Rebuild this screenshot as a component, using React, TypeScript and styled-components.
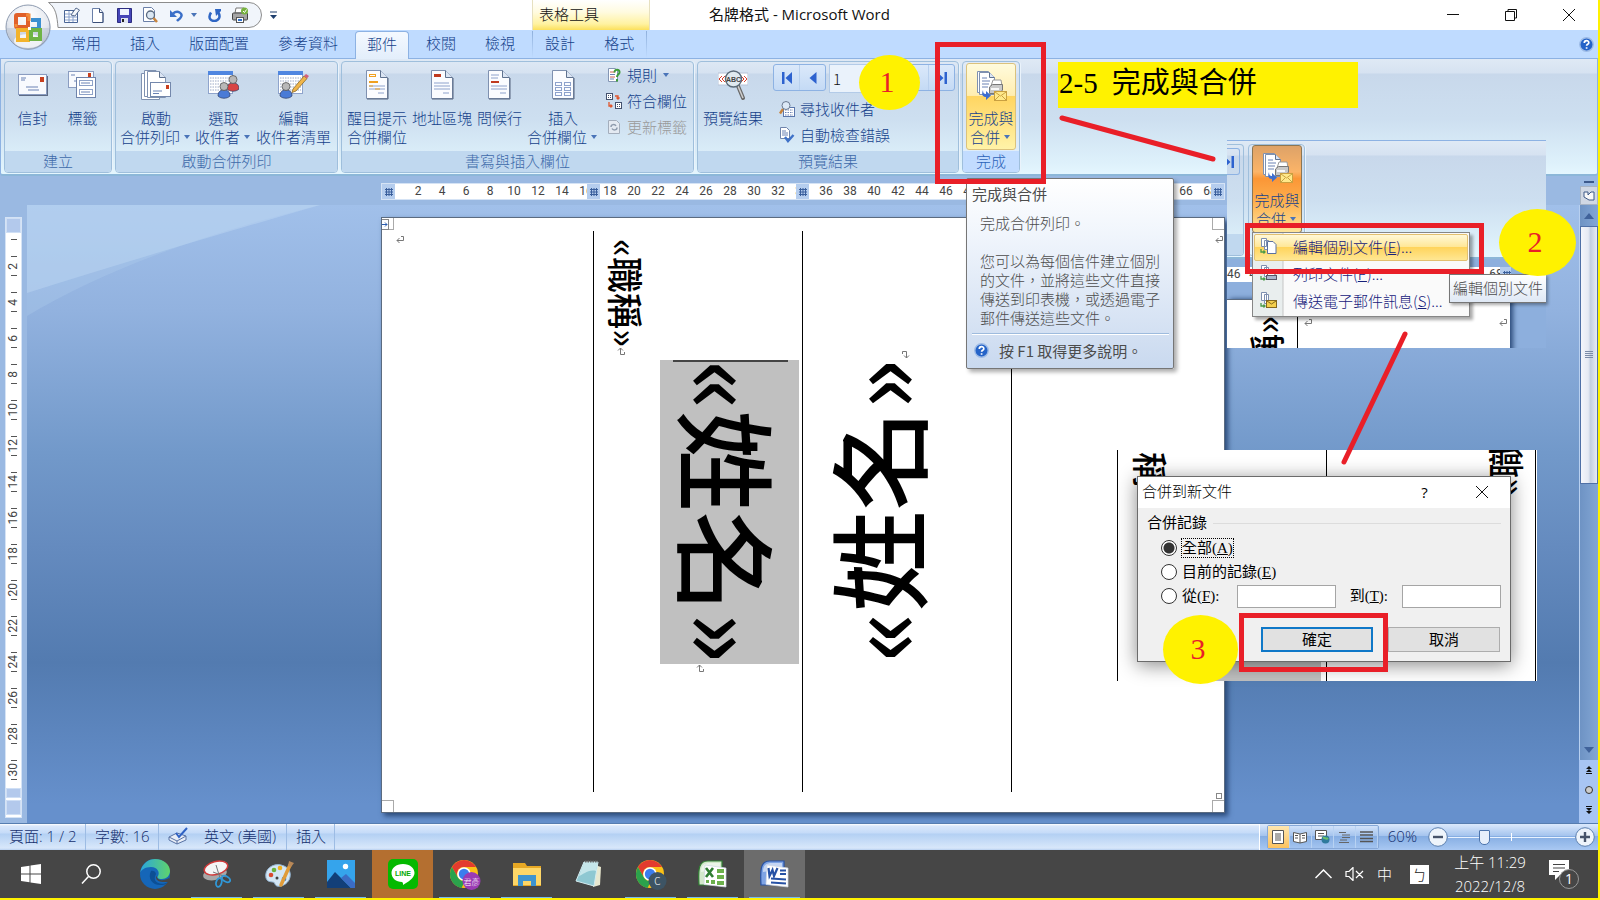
import React from "react";
import styled, { createGlobalStyle, css } from "styled-components";

const sans = `"Open Sans", "Noto Sans CJK TC", sans-serif`;
const cjk = `"Noto Sans CJK TC", "Noto Sans", sans-serif`;
const serif = `"Liberation Serif", "Noto Sans CJK TC", serif`;
const RED = "#e91f28";

const Global = createGlobalStyle`
  * { box-sizing: border-box; }
  body { margin: 0; background: #9ab9e2; font-family: ${sans}; font-size: 15px; font-weight: 300; }
  button, input { font: inherit; color: inherit; margin: 0; }
  button { background: none; border: 0; padding: 0; cursor: pointer; }
  svg { display: block; flex: none; }
  p { margin: 0; }
`;

/* ---------- shell ---------- */
const Shell = styled.div`
  position: relative; display: flex; flex-direction: column; min-height: 100vh;
  border-right: 2px solid #fff200; border-bottom: 2px solid #fff200; overflow: hidden;
`;
const TitleBar = styled.header`
  height: 30px; display: flex; align-items: center; background: #fff; color: #111;
`;
const Orb = styled.button`
  position: absolute; left: 4px; top: 3px; z-index: 2;
`;
const Quick = styled.div`
  position: relative; width: 214px; height: 30px; margin-left: 48px; padding-left: 11px;
  display: flex; align-items: center;
  & > svg { position: absolute; left: 0; top: 2px; }
`;
const QuickBtn = styled.button<{ $w?: number }>`
  position: relative; width: ${(p) => p.$w ?? 26}px; height: 22px;
  display: flex; align-items: center; justify-content: center;
`;
const ContextTitle = styled.div`
  width: 118px; height: 30px; margin-left: 248px; padding-left: 6px; line-height: 28px;
  background: linear-gradient(#ffffff, #fffbe0 40%, #fff2a0 80%, #fbe05c);
  border-left: 1px solid #e6e0c0; border-right: 1px solid #e6e0c0;
`;
const WindowTitle = styled.h1`
  margin: 0 0 0 59px; height: 30px; font-size: 15px; font-weight: 400; line-height: 28px; white-space: nowrap;
`;
const WindowButtons = styled.div`
  margin-left: auto; display: flex;
  button { width: 58px; height: 28px; display: grid; place-items: center; }
`;

const TabRow = styled.nav`
  height: 29px; display: flex; align-items: flex-end; gap: 5px; padding: 0 4px 0 59px;
  background: #bfdbff; border-bottom: 1px solid #8db2e3;
`;
const Tab = styled.button<{ $active?: boolean }>`
  height: 27px; padding: 0 12px 3px; line-height: 24px; color: #15428b; font-family: ${cjk};
  ${(p) => p.$active && css`
    margin-bottom: -1px; height: 28px; padding: 0 11px 3px; border: 1px solid #8db2e3; border-bottom: 0;
    border-radius: 4px 4px 0 0; background: linear-gradient(#f4f9ff, #e3eefb);
  `}
`;
const ContextTabs = styled.div`
  display: flex; gap: 5px; padding: 0 1px;
  background: linear-gradient(#8fb0dc, #bfdbff) left / 1px 100% no-repeat,
    linear-gradient(#8fb0dc, #bfdbff) right / 1px 100% no-repeat;
`;
const HelpButton = styled.button` margin-left: auto; align-self: center; `;

/* ---------- ribbon ---------- */
const ribbonFill = `linear-gradient(#dfe9f5 0, #d6e2f1 14px, #c8d8eb 15px, #cddff0 60px, #def1fb 104px, #e4f6fe)`;
const Ribbon = styled.section`
  display: flex; gap: 3px; padding: 2px 3px; height: 117px; color: #15428b;
  background: ${ribbonFill}; font-family: ${cjk};
  border-left: 1px solid #8db2e3; border-right: 1px solid #8db2e3;
  border-bottom: 2px solid #8cb7d8; border-radius: 0 0 3px 3px;
`;
const Group = styled.div<{ $w: number; $hot?: boolean }>`
  width: ${(p) => p.$w}px; height: 112px; display: flex; flex-direction: column; flex: none;
  border: 1px solid #9fbfdc; border-radius: 4px; overflow: hidden; box-shadow: 1px 0 0 #eaf3fb;
  ${(p) => p.$hot && css`background: #e8f1fa66;`}
`;
const GroupBody = styled.div`
  height: 89px; display: flex; gap: 1px; padding: 0 3px;
`;
const Caption = styled.div<{ $hot?: boolean }>`
  height: 21px; line-height: 19px; text-align: center;
  color: ${(p) => (p.$hot ? "#2b62b8" : "#3e6aaa")};
  background: ${(p) => (p.$hot ? "#c2dcff" : "#c0d8ef")};
`;
const Big = styled.button<{ $w: number; $state?: "hot" | "pressed" }>`
  width: ${(p) => p.$w}px; flex: none; display: flex; flex-direction: column; align-items: center;
  padding-top: 7px; line-height: 19px; white-space: nowrap;
  ${(p) => p.$state === "hot" && css`
    height: 87px; margin-top: 1px; padding-top: 5px; border: 1px solid #dbc27c; border-radius: 3px;
    background: linear-gradient(#fffbdc, #ffedb0 37%, #ffd561 38%, #ffdf7a 60%, #fff3a8);
  `}
  ${(p) => p.$state === "pressed" && css`
    height: 88px; padding-top: 5px; border: 1px solid #8b7654; border-radius: 3px;
    background: linear-gradient(#dda268, #fbb468 30%, #fb9636 38%, #fdb04e 65%, #fee49a);
  `}
`;
const BigIcon = styled.span` height: 32px; margin-bottom: 7px; display: grid; place-items: center; `;
const Line = styled.span` display: flex; align-items: center; gap: 4px; `;
const Caret = styled.i`
  border: 3px solid transparent; border-top: 4px solid #4a74b8; border-bottom: 0; margin-right: 2px;
`;
const Stack = styled.div<{ $inset?: boolean }>`
  display: flex; flex-direction: column; padding-left: ${(p) => (p.$inset ? 7 : 4)}px;
`;
const Small = styled.button`
  height: 26px; display: flex; align-items: center; gap: 5px; white-space: nowrap;
  span { line-height: 26px; }
  &:disabled { color: #9a9a9a; }
  i { margin-left: 1px; }
`;
const Rule = styled.i` width: 1px; height: 56px; margin: 16px 0 0 5px; background: #9ab6d4; box-shadow: 1px 0 #eef5fc; `;
const NavRow = styled.div` display: flex; height: 34px; padding: 2px 0 0 1px; `;
const NavPair = styled.div`
  width: 53px; height: 27px; display: flex; border: 1px solid #8db2e3; border-radius: 3px;
  background: linear-gradient(#dbe9fa, #c4daf5);
  button { flex: 1; display: grid; place-items: center; }
  button + button { border-left: 1px solid #b8d0ee; }
`;
const RecordInput = styled.input`
  width: 68px; height: 29px; margin: 0 5px 0 3px; padding: 0 3px; border: 1px solid #b3cbe8;
  background: #eaf2fb; color: #111;
`;

/* ---------- work area ---------- */
const Work = styled.main`
  flex: 1; display: grid; grid-template-columns: 27px 1fr 19px; grid-template-rows: 29px 1fr;
  background: #9ab9e2;
`;
const RulerStrip = styled.div` grid-column: 2; display: flex; justify-content: center; padding-top: 7px; `;
const HRuler = styled.div`
  position: relative; width: 844px; height: 17px; padding-left: 24px; display: flex; overflow: hidden;
  border: 1px solid #d5e3f5; background: #fff; color: #444; font: 12px/15px Roboto, ${cjk};
  span { width: 24px; flex: none; text-align: center; }
`;
const Marker = styled.i<{ $x: number }>`
  position: absolute; left: ${(p) => p.$x}px; top: 0; width: 13px; height: 15px;
  display: grid; place-items: center; background: #b5cdee;
`;
const LeftCol = styled.div` grid-column: 1; grid-row: 1 / 3; padding: 41px 5px 0; `;
const VRuler = styled.div`
  width: 17px; display: flex; flex-direction: column; border: 1px solid #d5e3f5; background: #fff;
  color: #444; font: 12px/15px Roboto, ${cjk};
`;
const VCap = styled.i<{ $h: number }>`
  height: ${(p) => p.$h}px; background: #b3c9ec; border: 1px solid #cfdff5; margin-bottom: 2px;
  &:first-child { margin: 0; }
`;
const VUnit = styled.span<{ $first?: boolean }>`
  height: ${(p) => (p.$first ? 15 : 36)}px; display: flex; flex-direction: column; align-items: center;
  justify-content: space-between;
  b { font-weight: 400; writing-mode: vertical-rl; transform: rotate(180deg); line-height: 15px; }
  &::before, &::after { content: ""; width: 6px; height: 1px; background: #555; margin: 9px 0 0; }
  &::after { margin: 0 0 8px; display: ${(p) => (p.$first ? "none" : "block")}; }
  &::before { margin: ${(p) => (p.$first ? 6 : 8)}px 0 0; }
`;
const Canvas = styled.div`
  position: relative; grid-column: 2; display: flex; justify-content: center; align-items: flex-start;
  padding: 12px 0 10px;
  background: linear-gradient(#a1c0ea, #92b2df 17%, #7299ca 40%, #658bbf 55%, #537bb0 74%, #6690cc 97%);
  & > svg { position: absolute; left: 0; top: 0; }
`;
const Page = styled.article`
  position: relative; width: 844px; min-height: 596px; padding: 13px 0 20px 14px; display: grid;
  grid-template-columns: 198px 209px 209px 1fr; background: #fff; color: #000;
  border: 1px solid #5b6b80; box-shadow: 3px 3px 5px #2b4a78;
`;
const Corner = styled.i<{ $r?: boolean; $b?: boolean }>`
  position: absolute; width: 12px; height: 12px; border: 0 solid #aaa;
  ${(p) => (p.$r ? "right: 0; border-left-width: 1px;" : "left: 0; border-right-width: 1px;")}
  ${(p) => (p.$b ? "bottom: 0; border-top-width: 1px;" : "top: 0; border-bottom-width: 1px;")}
`;
const Move = styled.i`
  position: absolute; left: 0; top: 1px; width: 7px; height: 11px; border: 1px solid #888; border-left: 0;
  color: #2a5db0; display: grid; place-items: center;
`;
const EndHandle = styled.i` position: absolute; right: 2px; bottom: 13px; width: 6px; height: 6px; border: 1px solid #888; `;
const Cell = styled.div`
  display: flex; justify-content: space-between; min-height: 561px;
  &:not(:last-of-type) { border-right: 1px solid #000; }
  & > svg { margin-top: 4px; }
  & > svg:only-child { margin-left: auto; }
`;
const FirstCell = styled(Cell)` & > svg:only-child { margin-left: 0; } `;
const Column = styled.div<{ $top: number; $side: number; $mark?: number }>`
  padding: ${(p) => p.$top}px ${(p) => p.$side}px 0; display: flex; flex-direction: column; flex: none;
  & > svg { margin-left: ${(p) => p.$mark ?? 0}px; }
`;
const NameColumn = styled(Column)` padding-right: 5px; padding-left: 0; `;
const VText = styled.span<{ $size: number; $flip?: boolean }>`
  writing-mode: vertical-rl; text-orientation: sideways; font: 500 ${(p) => p.$size}px/1 ${cjk};
  white-space: nowrap; ${(p) => p.$flip && "transform: rotate(180deg);"}
`;
const Selected = styled.div`
  width: 139px; height: 304px; display: flex; justify-content: center; align-items: center; position: relative;
  background: #c0c0c0;
  &::before { content: ""; position: absolute; top: 0; left: 13px; right: 11px; height: 2px; background: #444; }
`;

const ScrollCol = styled.div` grid-column: 3; grid-row: 1 / 3; display: flex; flex-direction: column; align-items: center; `;
const ScrollTop = styled.div`
  width: 100%; height: 29px; padding-top: 5px; display: flex; flex-direction: column; align-items: center; gap: 3px;
  i { width: 10px; height: 2px; background: #3c5a8c; flex: none; }
  button { width: 18px; height: 20px; background: #d0d8e4; border: 1px solid #a8b4c4; display: grid; place-items: center; }
`;
const Track = styled.div`
  width: 100%; flex: 1; display: flex; flex-direction: column; align-items: center; border-left: 1px solid #b8d0f0;
  background: linear-gradient(90deg, #6e93c4, #83a6d4);
  button { width: 100%; height: 21px; display: grid; place-items: center; }
  button:last-child { margin-top: auto; }
`;
const Thumb = styled.div`
  width: 100%; height: 258px; display: grid; place-items: center; border: 1px solid #4f70a6;
  background: linear-gradient(90deg, #f4f6fb, #e6eaf3 45%, #c3cfe2 60%, #e8ecf5);
`;
const Browse = styled.div`
  width: 100%; height: 63px; display: flex; flex-direction: column; background: #a8c5f3;
  button { height: 20px; display: grid; place-items: center; }
`;

/* ---------- status bar ---------- */
const Status = styled.footer`
  height: 27px; display: flex; align-items: stretch; color: #15306e; line-height: 22px; flex: none;
  border-top: 1px solid #567db0;
  background: linear-gradient(#fff 0, #d9e7fb 2px, #c5dbf8 9px, #b3d0f3 10px, #d8e7fa 24px, #b9d0f0);
`;
const Stat = styled.span<{ $w: number }>`
  width: ${(p) => p.$w}px; padding: 0 0 2px 9px; display: flex; align-items: center; gap: 16px;
  border-right: 1px solid #9dbce4; white-space: nowrap;
`;
const StatusRight = styled.div`
  margin-left: auto; padding: 0 3px 0 7px; display: flex; align-items: center; border-left: 1px solid #fff;
  background: linear-gradient(#dbe9fc, #a5c4ee 45%, #86aee3 48%, #a9c8f2);
`;
const Views = styled.div`
  display: flex; height: 24px; border: 1px solid #86a8d8; border-radius: 2px;
  button { width: 22px; display: grid; place-items: center; border-right: 1px solid #b8d2f2; }
  button:first-child { background: linear-gradient(#fde6b0, #fdc35f); }
`;
const Percent = styled.span` margin: 0 11px 0 9px; padding-bottom: 2px; `;
const Round = styled.button` width: 20px; height: 20px; `;
const Zoom = styled.input`
  appearance: none; width: 127px; height: 16px; padding: 0;
  background: linear-gradient(#fff, #fff) 63px 4px / 1px 8px no-repeat,
    linear-gradient(#e8f2ff, #e8f2ff) 0 8px / 100% 1px no-repeat;
  &::-webkit-slider-thumb {
    appearance: none; width: 11px; height: 15px; border: 1px solid #4d75ad; background: #e6effb;
    border-radius: 1px 1px 5px 5px;
  }
`;

/* ---------- task bar ---------- */
const Taskbar = styled.footer`
  height: 48px; display: flex; gap: 1px; background: #464646; color: #fff; flex: none;
`;
const Task = styled.button<{ $bg?: string; $open?: boolean }>`
  width: 61px; height: 48px; display: grid; place-items: center; background: ${(p) => p.$bg ?? "none"};
  ${(p) => p.$open && css`
    background-image: linear-gradient(#76b9ed, #76b9ed); background-size: 51px 1px;
    background-position: 50% 100%; background-repeat: no-repeat;
  `}
`;
const Tray = styled.div`
  margin-left: auto; display: flex; align-items: center; padding-right: 19px;
  & > button { display: grid; place-items: center; }
`;
const TrayIcon = styled.button` margin-left: 13px; font-family: ${cjk}; line-height: 20px; `;
const Clock = styled.time` width: 76px; margin: 0 21px 0 23px; text-align: center; line-height: 24px; white-space: nowrap; `;
const Ime = styled.button` width: 19px; height: 19px; background: #fff; color: #222; line-height: 19px; margin-left: 18px; font-family: ${cjk}; `;

/* ---------- floating layers ---------- */
const Float = styled.div<{ $x: number; $y: number; $w?: number; $h?: number }>`
  position: absolute; left: ${(p) => p.$x}px; top: ${(p) => p.$y}px;
  ${(p) => p.$w && `width: ${p.$w}px;`} ${(p) => p.$h && `height: ${p.$h}px;`}
`;
const Frame = styled(Float)` border: 5px solid ${RED}; pointer-events: none; `;
const Badge = styled(Float)`
  border-radius: 50%; background: #fff200; color: ${RED}; display: grid; place-items: center;
  padding: 0 5px 2px 0; font: 30px/1 ${serif};
`;
const Note = styled(Float)`
  background: #fff200; color: #000; font: 29px/43px ${serif}; padding-left: 1px; white-space: nowrap;
  span { margin-left: 14px; }
`;
const SuperTip = styled(Float)`
  border: 1px solid #767676; border-radius: 2px; padding: 5px 4px 0 5px; color: #4c4c4c;
  background: linear-gradient(#fff, #f0f5fc 30%, #c9d9ef); box-shadow: 3px 3px 4px #0005; font-family: ${cjk};
  line-height: 19px;
  p { padding: 0 8px; margin-bottom: 19px; }
`;
const TipTitle = styled.div` margin-bottom: 10px; font-weight: 400; `;
const TipHelp = styled.div`
  display: flex; align-items: center; gap: 10px; height: 35px; margin-top: -13px; padding: 0 0 2px 2px; white-space: nowrap;
  border-top: 1px solid #9ebbdd; box-shadow: inset 0 1px #fff; font-weight: 400;
`;
const Snip = styled(Float)` overflow: hidden; background: #8dafdd; `;
const SnipRibbon = styled.div`
  height: 119px; display: flex; gap: 4px; padding-top: 3px; background: ${ribbonFill}; color: #15428b;
  border-top: 1px solid #8db2e3; border-bottom: 2px solid #8cb7d8; font-family: ${cjk};
`;
const GroupEdge = styled.div`
  width: 17px; height: 112px; border: 1px solid #9fbfdc; border-left: 0; border-radius: 0 4px 4px 0;
  display: flex; flex-direction: column; justify-content: space-between; overflow: hidden;
  & > span { width: 13px; height: 27px; margin-top: 3px; border: 1px solid #8db2e3; border-left: 0; border-radius: 0 3px 3px 0; display: flex; align-items: center; justify-content: flex-end; padding-right: 4px; overflow: hidden; }
  & > i { height: 21px; background: #c0d8ef; }
`;
const SnipRuler = styled.div`
  position: relative; display: flex; width: 284px; height: 15px; margin: 8px 0 17px; background: #fff; color: #444;
  overflow: hidden; font: 12px/15px Roboto, ${cjk};
  span { width: 24px; flex: none; text-align: center; }
  span:first-child { width: 17px; padding-right: 5px; }
`;
const SnipPage = styled.div`
  width: 283px; height: 60px; display: flex; justify-content: space-between; background: #fff;
  border-top: 1px solid #5b6b80; box-shadow: 3px 0 5px #2b4a78;
  & > div { width: 71px; padding: 16px 0 0 20px; border-right: 1px solid #000; }
  & > svg { margin: 18px 0 0 6px; }
  & > svg:last-child { margin: 18px 2px 0 auto; }
`;
const Menu = styled(Float)`
  border: 1px solid #868686; background: linear-gradient(90deg, #e9eeee 29px, #c5c5c5 30px, #fafafa 31px);
  box-shadow: 3px 3px 3px #0005; color: #15207a; font-family: ${cjk}; padding: 1px;
`;
const MenuItem = styled.button<{ $hot?: boolean }>`
  width: 100%; height: 27px; padding: 0 0 2px 5px; display: flex; align-items: center; gap: 16px; line-height: 22px;
  border: 1px solid transparent; white-space: nowrap;
  ${(p) => p.$hot && css`
    border-color: #e2c070; border-radius: 2px;
    background: linear-gradient(#fff8d8, #ffe796 48%, #ffd45c 50%, #ffe793);
  `}
`;
const PlainTip = styled(Float)`
  border: 1px solid #767676; border-right: 0; padding-left: 3px; line-height: 25px; color: #4c4c4c; white-space: nowrap;
  background: linear-gradient(#fff, #dfe8f5); box-shadow: 2px 2px 3px #0005; font-family: ${cjk};
`;
const SnipDoc = styled(Float)`
  display: grid; grid-template-columns: 209px 209px 2px; overflow: hidden; background: #fff;
  border-left: 1px solid #000;
  & > div { border-right: 1px solid #000; overflow: hidden; display: flex; align-items: flex-start; }
`;
const Peek = styled.div<{ $x: number; $y: number }>` margin: ${(p) => p.$y}px 0 0 ${(p) => p.$x}px; `;
const PeekSel = styled.i` width: 135px; height: 60px; margin: 175px 0 0 16px; background: #c0c0c0; `;
const Dialog = styled(Float)`
  border: 1px solid #6b6b6b; background: #f0f0f0; color: #000; box-shadow: 0 3px 18px #0007;
  font-family: ${serif}; font-weight: 400;
`;
const DialogTitle = styled.header`
  height: 31px; display: flex; align-items: center; padding-left: 4px; background: #fff; font-family: ${sans};
  line-height: 28px;
  strong { font-weight: 300; flex: 1; height: 31px; }
  button { width: 57px; height: 29px; display: grid; place-items: center; align-self: flex-start; }
`;
const Fieldset = styled.fieldset`
  border: 0; margin: 3px 0 0; padding: 1px 9px 0;
`;
const Legend = styled.legend`
  width: 100%; padding: 0; display: flex; align-items: center; gap: 6px; line-height: 24px;
  &::after { content: ""; flex: 1; height: 1px; background: #dcdcdc; }
`;
const Choice = styled.div`
  height: 24px; padding-left: 14px; display: flex; align-items: center; gap: 5px; line-height: 18px; white-space: nowrap;
`;
const Radio = styled.input`
  appearance: none; width: 16px; height: 16px; border: 1px solid #333; border-radius: 50%; background: #fff;
  &:checked { background: radial-gradient(circle, #333 5px, #fff 6px); }
`;
const RangeField = styled.span`
  display: flex; align-items: center; margin-left: auto;
  label { margin: 0 14px; }
`;
const Box = styled.input` width: 99px; height: 23px; border: 1px solid #a5a5a5; background: #fff; padding: 0 3px; `;
const Dotted = styled.label` outline: 1px dotted #000; `;
const Buttons = styled.div` display: flex; justify-content: flex-end; gap: 15px; padding: 19px 10px 0; `;
const Push = styled.button<{ $main?: boolean }>`
  width: 112px; height: 25px; border: ${(p) => (p.$main ? "2px solid #0f78c8" : "1px solid #adadad")};
  background: #e1e1e1; line-height: 20px;
`;
const Strokes = styled.svg` position: absolute; left: 0; top: 0; pointer-events: none; `;

/* ---------- icons ---------- */
const Ico = ({ w, h = w, children }: { w: number; h?: number; children: React.ReactNode }) => (
  <svg width={w} height={h} viewBox={`0 0 ${w} ${h}`} fill="none">{children}</svg>
);
const OfficeLogo = () => (
  <Ico w={48}>
    <defs>
      <radialGradient id="orb" cx=".5" cy=".25" r=".8"><stop offset="0" stopColor="#fff" /><stop offset=".6" stopColor="#e4e8ef" /><stop offset="1" stopColor="#a9b3c4" /></radialGradient>
    </defs>
    <circle cx="24.500" cy="25" r="22" fill="#7d8ba1" opacity=".5" />
    <circle cx="24" cy="24" r="22" fill="url(#orb)" stroke="#8e9bb0" />
    <path d="M3 25h42a21 21 0 0 1-42 0Z" fill="#b9c4d6" opacity=".55" />
    <ellipse cx="24" cy="38" rx="14" ry="7" fill="#fff" opacity=".75" />
    <rect x="12" y="12" width="12" height="12" rx="1" stroke="#e0602a" strokeWidth="4" />
    <path d="M27 17h8v9h-8" stroke="#3b8fd0" strokeWidth="4" />
    <rect x="14" y="27" width="10" height="10" stroke="#f3b32b" strokeWidth="4" />
    <rect x="27" y="27" width="9" height="9" stroke="#6fb446" strokeWidth="4" />
    <path d="M22 12h3v6M12 24v-3" stroke="#f28b3a" strokeWidth="3" />
    <path d="M24 24h3v3h-3z" fill="#fff" />
  </Ico>
);
const Help = ({ s = 15 }: { s?: number }) => (
  <svg width={s} height={s} viewBox="0 0 15 15"><circle cx="7.500" cy="7.500" r="6.700" fill="#2463c8" stroke="#9dbbe6" strokeWidth="1.400" /><path d="M5.300 6c0-3 4.500-3 4.500-.3 0 1.600-2.200 1.600-2.200 3M7.600 10.300v1.500" stroke="#fff" strokeWidth="1.700" fill="none" /></svg>
);
const Envelope = () => (
  <Ico w={30} h={22}>
    <path d="M1 21.500h28.500V2" stroke="#5d6b85" strokeWidth="1.500" />
    <rect x=".5" y=".5" width="28" height="20" fill="#f8fafe" stroke="#8a9cc0" />
    <path d="M3 4h5M3 6h4M8 13h12M10 16h11" stroke="#6b82b4" /><rect x="22" y="3" width="4" height="5" fill="#c8401f" />
  </Ico>
);
const Labels = () => (
  <Ico w={29} h={28}>
    <rect x=".5" y=".5" width="25" height="16" fill="#f8fafe" stroke="#8a9cc0" /><rect x="20" y="2" width="3" height="4" fill="#c8401f" /><path d="M3 4h4M6 10h3" stroke="#6b82b4" />
    <rect x="8.500" y="6.500" width="19" height="20" fill="#fff" stroke="#6f84ac" /><rect x="11.500" y="9.500" width="13" height="5" stroke="#8ea2c8" /><rect x="11.500" y="18.500" width="13" height="5" stroke="#8ea2c8" />
    <path d="M13 12h9M13 21h9" stroke="#6b82b4" />
  </Ico>
);
const sheet = "M.5 .5H14.500L21.500 7.500V28.500H.5Z";
const Sheet = ({ children }: { children?: React.ReactNode }) => (
  <><path d={sheet} fill="#fbfcff" stroke="#7f91b0" /><path d="M14.500 .5v7h7" fill="#dbe5f3" stroke="#5f728f" /><path d="M22 8v21H1" stroke="#56657f" />{children}</>
);
const StartMerge = () => (
  <Ico w={31} h={30}>
    <path d="M.5 3.500h18v26H.5z" fill="#fff" stroke="#7f91b0" /><path d="M3.500.5H15v26H3.500z" fill="#fff" stroke="#7f91b0" />
    <path d="M6.500 1.500h12l6 6v20h-18z" fill="#fff" stroke="#7f91b0" /><path d="M18.500 1.500v6h6" fill="#dbe5f3" stroke="#5f728f" />
    <rect x="9.500" y="12.500" width="20" height="14" fill="#fff" stroke="#7488ac" /><path d="M12 21h9M12 23.500h6" stroke="#6b82b4" /><rect x="25" y="15" width="3" height="4" fill="#c8401f" />
  </Ico>
);
const Person = ({ x, y, c }: { x: number; y: number; c: string }) => (
  <g transform={`translate(${x} ${y})`}><path d="M0 14c0-5 3-6 6-6s6 1 6 6c-3 3-9 3-12 0Z" fill={c} stroke="#2e3d66" strokeWidth=".7" /><circle cx="6" cy="4.500" r="4" fill="#b8b8b8" stroke="#555" strokeWidth=".8" /></g>
);
const TableBase = () => (
  <><rect x=".5" y=".5" width="24" height="22" fill="#fff" stroke="#8fa4cc" /><rect x="0" y="0" width="25" height="4" fill="#4f86e0" />
    <path d="M2 7h21M2 10h21M2 13h21M2 16h21M2 19h21" stroke="#9aa8c4" strokeDasharray="1.500 1" /></>
);
const SelectPeople = () => <Ico w={31} h={29}><TableBase /><Person x={19} y={4} c="#d84444" /><Person x={10} y={11} c="#4a7bd6" /></Ico>;
const EditPeople = () => (
  <Ico w={31} h={29}><TableBase /><Person x={2} y={11} c="#4a7bd6" /><path d="M15 18 26 5l3 2.500L18 20l-4 1.500Z" fill="#f0b54a" stroke="#8a6a2a" strokeWidth=".8" /><path d="m26 5 2-2 3 2-2 2.500Z" fill="#d2607a" /></Ico>
);
const Highlight = () => <Ico w={23} h={30}><Sheet><rect x="3.500" y="4.500" width="6" height="2" stroke="#f0a020" /><path d="M3 12h9" stroke="#f0a020" strokeWidth="2" /><path d="M3 16h16M3 19h16M12 23h6" stroke="#8ea2cc" /><path d="M3 16h4M9 19h5" stroke="#f0a020" /></Sheet></Ico>;
const Address = () => <Ico w={23} h={30}><Sheet><rect x="3" y="4" width="7" height="3" fill="#c03a20" /><path d="M3 13h15M3 16h16M3 19h16M12 23h6" stroke="#8ea2cc" /></Sheet></Ico>;
const Greeting = () => <Ico w={23} h={30}><Sheet><path d="M3 5h8M3 8h7M3 16h16M3 19h16M12 23h6" stroke="#8ea2cc" /><path d="M3 12h8" stroke="#c03a20" strokeWidth="2" /></Sheet></Ico>;
const InsertField = () => <Ico w={23} h={30}><Sheet>{[12, 17, 22].map((y) => <g key={y} stroke="#8ea2cc"><rect x="3.500" y={y + 0.5} width="6" height="3" /><rect x="12.500" y={y + 0.5} width="6" height="3" /></g>)}</Sheet></Ico>;
const Rules = () => <Ico w={16}><path d="M2.500 1.500h7l2 2v11h-9z" fill="#fff" stroke="#8496b4" /><path d="M4 5h5M4 10h5" stroke="#d0604a" /><path d="M4 7.500h5M4 12h4" stroke="#6b82b4" /><path d="M8.500 5.500c0-4 5.500-3.500 5 0-.3 1.800-2.500 2-2.500 4.500M11 12v2.500" stroke="#3f9a3a" strokeWidth="2" /></Ico>;
const Match = () => <Ico w={16}><rect x=".5" y=".5" width="6" height="6" fill="#fff" stroke="#44526e" /><rect x="9.500" y="9.500" width="6" height="6" fill="#fff" stroke="#44526e" /><path d="M2 2.500h3M2 4.500h3M11 11.500h3M11 13.500h3" stroke="#44526e" strokeDasharray="1" /><path d="M9 3h3v3m-1.500-1.500L12 6l1.500-1.500M3 9v4h3M4.500 11.500 6 13l-1.500 1.500" stroke="#e0552c" strokeWidth="1.300" /></Ico>;
const Update = () => <Ico w={16}><path d="M2.500 1.500h8l3 3v10h-11z" fill="#e4eaf2" stroke="#a4aebc" /><path d="M5 8c0-3 4-3 5-1M11 8.500c0 3-4 3-5 1" stroke="#8f9cae" strokeWidth="1.500" /></Ico>;
const Preview = () => (
  <Ico w={30} h={30}><rect y="3" width="30" height="12" fill="#fff" stroke="#b8c4d8" /><path d="m4 6-3 3 3 3M7 6 4 9l3 3M26 6l3 3-3 3M23 6l3 3-3 3" stroke="#d8402c" />
    <path d="m20 16 5 12" stroke="#6a6a6a" strokeWidth="4" strokeLinecap="round" /><path d="m20 16 5 12" stroke="#d0d0d0" strokeWidth="1.500" /><circle cx="15.500" cy="9" r="8" fill="#dfe9ef" stroke="#5a6a78" strokeWidth="1.400" />
    <text x="15.500" y="12" fontSize="7" fontWeight="700" fontFamily="Liberation Sans" textAnchor="middle" fill="#444">ABC</text></Ico>
);
const Find = () => <Ico w={16}><rect x="4.500" y="6.500" width="11" height="9" fill="#fff" stroke="#5b77ac" /><path d="M6 9h8M6 11.500h8M6 14h8" stroke="#6b82b4" strokeDasharray="1.500 1" /><path d="m4 8-3 4.500" stroke="#c8843c" strokeWidth="2.400" /><circle cx="7" cy="4.500" r="4" fill="#dce9f6" stroke="#6a7a90" /></Ico>;
const Check = () => <Ico w={16}><path d="M1.500.5h6l3 3v8h-9z" fill="#fff" stroke="#6f84ac" /><path d="M3 4h4M3 6h6M3 8h6" stroke="#6b82b4" /><path d="m6 10 3 4 5.500-6" stroke="#3f72c8" strokeWidth="2.400" /></Ico>;
const Finish = () => (
  <Ico w={31} h={31}><path d="M1.500 1.500h11v21h-11z" fill="#fff" stroke="#7f91b0" /><path d="M3.500 2.500h10l5 5v17h-15z" fill="#fff" stroke="#7f91b0" /><path d="M13.500 2.500v5h5" fill="#dbe5f3" stroke="#5f728f" /><path d="M6 8h5M6 11h8M6 14h7M6 17h6" stroke="#6b82b4" />
    <path d="M17 10h8l1 6H15z" fill="#fff" stroke="#999" /><path d="M13.500 17l3-2.500h10V20l-3 3.500h-10z" fill="#c9c9c9" stroke="#777" /><path d="M15 19h8" stroke="#f8f8f8" strokeWidth="2" /><rect x="18.500" y="21.500" width="12" height="9" fill="#ffe98a" stroke="#c9a040" /><path d="m19 22 5.500 4 5.500-4M19 30l4-4M30 30l-4-4" stroke="#c9a040" />
    <path d="M7 20c0 3 1 4 3 4v-3l5 4.500-5 4.500v-3c-3 0-5-2-3-7Z" fill="#3f6fd0" /></Ico>
);
const MenuIcon = ({ k }: { k: number }) => (
  <Ico w={17}><path d="M1.500.5h5v8h-5zM4.500 2.500h4v9h-4z" fill="#fff" stroke="#7d8fb0" /><path d="M1 11v3h4M3.500 12.500 5 14l-1.500 1.500" stroke="#4a9a48" strokeWidth="1.300" />
    {k === 0 && <path d="M7.500 3.500h5.500l3 3v9H7.500z" fill="#fff" stroke="#5a70a0" />}
    {k === 1 && <><path d="M8 8h6l2 3H7z" fill="#fff" stroke="#666" /><rect x="6.500" y="10.500" width="10" height="4" fill="#aab6cc" stroke="#556" /></>}
    {k === 2 && <><rect x="6.500" y="8.500" width="10" height="7" fill="#f4cf4c" stroke="#84681e" /><path d="m7 9 4.500 3L16 9" stroke="#84681e" /></>}
  </Ico>
);
const FirstRec = () => <Ico w={12}><path d="M1 0h2.500v12H1zM11 0v12L4.500 6z" fill="#2d62cf" /></Ico>;
const PrevRec = () => <Ico w={8} h={12}><path d="M7.500 0v12L.5 6z" fill="#2d62cf" /></Ico>;
const NextRec = () => <Ico w={8} h={12}><path d="M.5 0v12l7-6z" fill="#2d62cf" /></Ico>;
const LastRec = () => <Ico w={12}><path d="M8.500 0H11v12H8.500zM1 0v12l6.500-6z" fill="#2d62cf" /></Ico>;
const Pilcrow = ({ a = 0 }: { a?: number }) => (
  <svg width="9" height="9" viewBox="0 0 9 9" fill="none" stroke="#777"><g transform={`rotate(${a} 4.500 4.500)`}><path d="M5 1.500h2.500v4H1M3.500 3 1 5.500 3.500 8" /></g></svg>
);
const GridMark = () => <Ico w={8}><path d="M1.500 0v8M4 0v8M6.500 0v8M0 1.500h8M0 4h8M0 6.500h8" stroke="#3a5f9c" /></Ico>;
const Chrome = ({ badge, fill, text }: { badge: string; fill: string; text: string }) => (
  <Ico w={32}><g transform="translate(0 1)"><circle cx="15" cy="15" r="14" fill="#fbc116" /><path d="M2.900 8A14 14 0 0 1 27.100 8H15a7 7 0 0 0-6.100 10.500Z" fill="#e33b2e" /><path d="M2.900 8 9 18.500A7 7 0 0 0 16 22l-3.500 6.900A14 14 0 0 1 2.900 8Z" fill="#2ba24c" /><circle cx="15" cy="15" r="6.800" fill="#fff" /><circle cx="15" cy="15" r="5.200" fill="#3b7ded" /></g>
    <circle cx="22.500" cy="23" r="9" fill={fill} /><text x="22.500" y="26.500" fontSize={text} fontFamily="Noto Sans CJK TC" textAnchor="middle" fill="#fff">{badge}</text></Ico>
);
const OfficeApp = ({ c, d, excel }: { c: string; d: string; excel?: boolean }) => (
  <Ico w={29} h={28}><path d="M1 25C0 8 1 1 10 1h14v14L10 25Z" fill={d} stroke={c} strokeWidth="1.200" /><path d="M3 12C3 5 6 3 12 3h10v6Z" fill="#fff" opacity=".55" />
    <path d="M7 5 28 8v19L6 24.500Z" fill="#fff" stroke="#cdd6e4" strokeWidth=".7" />
    {excel ? <><path d="m8 8 7 9m0-9-7 9" stroke={c} strokeWidth="2.600" /><path d="M19 9h7v4h-7zM19 15h7v4h-7zM19 21h7v4h-7zM13 20h4v4h-4zM8 20h3v3H8z" fill="#6cb04c" /></>
      : <><path d="m8.500 8 1 8 3-6 1.500 6L17.500 8" stroke={c} strokeWidth="2.200" /><path d="M20 10.500h6M20 14h6M11 18.500l15 1M11 22.500l15 1" stroke={c} strokeWidth="2" /></>}
  </Ico>
);

const up = <Ico w={10} h={6}><path d="m5 0 5 6H0z" fill="#40629a" /></Ico>;
const down = <Ico w={10} h={6}><path d="M0 0h10L5 6z" fill="#40629a" /></Ico>;

const BigButton = ({ icon, w, l1, l2, drop, state }: { icon: React.ReactNode; w: number; l1: string; l2?: string; drop?: boolean; state?: "hot" | "pressed" }) => (
  <Big $w={w} $state={state}><BigIcon>{icon}</BigIcon><Line>{l1}</Line>{l2 && <Line>{l2}{drop && <Caret />}</Line>}</Big>
);

const evens = (a: number, b: number) => Array.from({ length: (b - a) / 2 + 1 }, (_, i) => a + i * 2);

export default function App() {
  return (
    <Shell>
      <Global />
      <Orb aria-label="Office"><OfficeLogo /></Orb>
      <TitleBar>
        <Quick>
          <svg width="214" height="26" viewBox="0 0 214 26"><path d="M.5 .5H201a12.500 12.500 0 0 1 0 25H10C9 14 8 6 .5 .5Z" fill="#f1f5fb" stroke="#8c8c8c" /></svg>
          <QuickBtn aria-label="表格"><Ico w={16}><path d="M.5 3.500h13v12H.5z" fill="#fff" stroke="#4a6596" /><path d="M1 7h12M1 10h12M1 13h12M5 4v11M9 4v11" stroke="#88a0cc" /><path d="m7 8 5-7 3.500 2L11 9Z" fill="#f4f7fb" stroke="#5a6e90" /></Ico></QuickBtn>
          <QuickBtn aria-label="開新檔案"><Ico w={12} h={15}><path d="M.5.5h7l3.500 4v10H.5z" fill="#fff" stroke="#6a7fa8" /><path d="M7.500.5v4H11M11 5v9.500H1" stroke="#3b4f78" /></Ico></QuickBtn>
          <QuickBtn aria-label="儲存檔案"><Ico w={15}><path d="M.5.5h14v14H.5z" fill="#4545b8" stroke="#2c2c80" /><rect x="3" y="1" width="9" height="6" fill="#eef3ff" /><rect x="4" y="10" width="7" height="5" fill="#dfe4f0" /><rect x="5" y="11" width="2" height="3" fill="#222" /></Ico></QuickBtn>
          <QuickBtn aria-label="預覽列印"><Ico w={16}><path d="M1.500.5h8l3 3v11h-11z" fill="#fff" stroke="#6a7fa8" /><circle cx="8.500" cy="8" r="4" fill="#dbe7f2" stroke="#5a6a80" strokeWidth="1.300" /><path d="m11.500 11 3.500 4" stroke="#c8843c" strokeWidth="2.500" /></Ico></QuickBtn>
          <QuickBtn aria-label="復原"><Ico w={13}><path d="M3 4.500c5-4 10 0 8 3.500-1 2-3 3-4 4" stroke="#3b6fc8" strokeWidth="2.400" /><path d="M0 1v7h7z" fill="#3b6fc8" /></Ico></QuickBtn>
          <QuickBtn $w={12} aria-label="復原清單"><Caret /></QuickBtn>
          <QuickBtn aria-label="重複"><Ico w={13}><path d="M3 3.500C-1 10 4 12 6.500 12S14 9 10 3" stroke="#2f66c4" strokeWidth="2.500" /><path d="M7 0h6v2L8 7z" fill="#2f66c4" /></Ico></QuickBtn>
          <QuickBtn aria-label="快速列印"><Ico w={17} h={16}><path d="M4 1h8l1 5H3z" fill="#fff" stroke="#777" /><rect x=".5" y="6" width="15" height="7" rx="1" fill="#a5a5a5" stroke="#444" /><rect x="4.500" y="10.500" width="7" height="5" fill="#fff" stroke="#555" /><path d="M6 13h4" stroke="#2e72d2" strokeWidth="2" /><circle cx="12.500" cy="4" r="3.500" fill="#77b23f" /><path d="m11 4 1.500 1.500 2-3" stroke="#fff" /></Ico></QuickBtn>
        </Quick>
        <QuickBtn $w={22} aria-label="自訂快速存取工具列"><Ico w={7} h={8}><path d="M0 1h7" stroke="#1f3f6e" /><path d="M0 4h7L3.500 8z" fill="#1f3f6e" /></Ico></QuickBtn>
        <ContextTitle>表格工具</ContextTitle>
        <WindowTitle>名牌格式 - Microsoft Word</WindowTitle>
        <WindowButtons>
          <button aria-label="最小化"><Ico w={12}><path d="M0 5.500h12" stroke="#111" /></Ico></button>
          <button aria-label="還原"><Ico w={12}><path d="M.5 2.500h9v9h-9zM3 2.500v-2h8.500V9h-2" stroke="#111" /></Ico></button>
          <button aria-label="關閉"><Ico w={12}><path d="m0 0 12 12M12 0 0 12" stroke="#111" /></Ico></button>
        </WindowButtons>
      </TitleBar>

      <TabRow>
        {["常用", "插入", "版面配置", "參考資料"].map((t) => <Tab key={t}>{t}</Tab>)}
        <Tab $active>郵件</Tab>
        <Tab>校閱</Tab>
        <Tab>檢視</Tab>
        <ContextTabs><Tab>設計</Tab><Tab>格式</Tab></ContextTabs>
        <HelpButton aria-label="說明"><Help /></HelpButton>
      </TabRow>

      <Ribbon>
        <Group $w={108}>
          <GroupBody><BigButton w={49} icon={<Envelope />} l1="信封" /><BigButton w={49} icon={<Labels />} l1="標籤" /></GroupBody>
          <Caption>建立</Caption>
        </Group>
        <Group $w={223}>
          <GroupBody>
            <BigButton w={74} icon={<StartMerge />} l1="啟動" l2="合併列印" drop />
            <BigButton w={59} icon={<SelectPeople />} l1="選取" l2="收件者" drop />
            <BigButton w={79} icon={<EditPeople />} l1="編輯" l2="收件者清單" />
          </GroupBody>
          <Caption>啟動合併列印</Caption>
        </Group>
        <Group $w={353}>
          <GroupBody>
            <BigButton w={64} icon={<Highlight />} l1="醒目提示" l2="合併欄位" />
            <BigButton w={64} icon={<Address />} l1="地址區塊" />
            <BigButton w={49} icon={<Greeting />} l1="問候行" />
            <BigButton w={76} icon={<InsertField />} l1="插入" l2="合併欄位" drop />
            <Stack>
              <Small><Rules /><span>規則</span><Caret /></Small>
              <Small><Match /><span>符合欄位</span></Small>
              <Small disabled><Update /><span>更新標籤</span></Small>
            </Stack>
          </GroupBody>
          <Caption>書寫與插入欄位</Caption>
        </Group>
        <Group $w={262}>
          <GroupBody>
            <BigButton w={64} icon={<Preview />} l1="預覽結果" />
            <Rule />
            <div>
              <NavRow>
                <NavPair><button aria-label="第一筆記錄"><FirstRec /></button><button aria-label="上一筆記錄"><PrevRec /></button></NavPair>
                <RecordInput defaultValue="1" aria-label="記錄" />
                <NavPair><button aria-label="下一筆記錄"><NextRec /></button><button aria-label="最後一筆記錄"><LastRec /></button></NavPair>
              </NavRow>
              <Stack $inset><Small><Find /><span>尋找收件者</span></Small><Small><Check /><span>自動檢查錯誤</span></Small></Stack>
            </div>
          </GroupBody>
          <Caption>預覽結果</Caption>
        </Group>
        <Group $w={58} $hot>
          <GroupBody><BigButton w={50} state="hot" icon={<Finish />} l1="完成與" l2="合併" drop /></GroupBody>
          <Caption $hot>完成</Caption>
        </Group>
      </Ribbon>

      <Work>
        <LeftCol>
          <VRuler>
            <VCap $h={15} />
            <VUnit $first />
            {evens(2, 30).map((n) => <VUnit key={n}><b>{n}</b></VUnit>)}
            <VCap $h={10} />
            <VCap $h={15} />
          </VRuler>
        </LeftCol>
        <RulerStrip>
          <HRuler>
            {evens(2, 68).map((n) => <span key={n}>{n}</span>)}
            {[0, 205, 414, 829].map((x) => <Marker key={x} $x={x}><GridMark /></Marker>)}
          </HRuler>
        </RulerStrip>
        <Canvas>
          <svg width="300" height="112" viewBox="0 0 300 112"><path d="M0 0h293Q110 45 0 111Z" fill="#b4cff0" opacity=".3" /><path d="M0 0h293Q120 50 0 88Z" fill="#c4dbf6" opacity=".4" /></svg>
          <Page>
            <Corner /><Corner $r /><Corner $b /><Corner $r $b />
            <Move><Ico w={6} h={7}><path d="M0 3.500h5M3 1.500l2 2-2 2" stroke="#2a5db0" /></Ico></Move>
            <EndHandle />
            <FirstCell><Pilcrow /></FirstCell>
            <Cell>
              <Column $top={8} $side={15} $mark={8}><VText $size={36}>«職稱»</VText><Pilcrow a={90} /></Column>
              <NameColumn $top={129} $side={0} $mark={36}><Selected><VText $size={101}>«姓名»</VText></Selected><Pilcrow a={90} /></NameColumn>
            </Cell>
            <Cell>
              <Column $top={119} $side={22} $mark={76}><Pilcrow a={-90} /><VText $size={101} $flip>«姓名»</VText></Column>
              <Column $top={8} $side={9}><VText $size={36} $flip>«職稱»</VText></Column>
            </Cell>
            <Cell><Pilcrow /></Cell>
          </Page>
        </Canvas>
        <ScrollCol>
          <ScrollTop><i /><button aria-label="尺規"><Ico w={12}><path d="M1 2h4v3l3-3h3v8H6L1 7z" fill="#f8f8f8" stroke="#3f5a88" /></Ico></button></ScrollTop>
          <Track>
            <button aria-label="向上">{up}</button>
            <Thumb><Ico w={8} h={8}><path d="M0 .5h8M0 2.500h8M0 4.500h8M0 6.500h8" stroke="#7c8ca8" /></Ico></Thumb>
            <button aria-label="向下">{down}</button>
          </Track>
          <Browse>
            <button aria-label="上一頁"><Ico w={6} h={8}><path d="M3 0l3 3H0zM3 3l3 3H0zM0 7h6v1H0z" fill="#111" /></Ico></button>
            <button aria-label="選擇瀏覽物件"><Ico w={8}><circle cx="4" cy="4" r="3.500" fill="#ccc" stroke="#333" /></Ico></button>
            <button aria-label="下一頁"><Ico w={6} h={8}><path d="M0 0h6v1H0zM0 2h6L3 5zM0 5h6L3 8z" fill="#111" /></Ico></button>
          </Browse>
        </ScrollCol>
      </Work>

      <Status>
        <Stat $w={86}>頁面: 1 / 2</Stat>
        <Stat $w={73}>字數: 16</Stat>
        <Stat $w={128}><Ico w={20} h={18}><path d="m1 10 8-4 9 3v4l-9 4-8-4z" fill="#e8edf6" stroke="#5872a4" /><path d="m1 10 8 4 9-5M9 14v3" stroke="#5872a4" /><path d="m8 6 3 4 8-9" stroke="#2f62c4" strokeWidth="2" /></Ico>英文 (美國)</Stat>
        <Stat $w={48}>插入</Stat>
        <StatusRight>
          <Views>
            <button aria-label="整頁模式"><Ico w={14}><path d="M1.500.5h11v13h-11z" fill="#fff" stroke="#555" /><path d="M4 4h6M4 6h6M4 8h6M4 10h6" stroke="#555" /></Ico></button>
            <button aria-label="閱讀模式"><Ico w={14}><path d="M.5 2.500 7 4l6.500-1.500v9L7 13 .5 11.500zM7 4v9" fill="#fff" stroke="#555" /><path d="M2 5.500h3M2 8h3M9 5.500h3M9 8h3" stroke="#555" /></Ico></button>
            <button aria-label="Web 版面"><Ico w={15} h={14}><path d="M.5.5h11v9H.5z" fill="#fff" stroke="#555" /><path d="M3 3.500h6M3 6h6" stroke="#555" /><circle cx="10.500" cy="9.500" r="4" fill="#2e7a9c" /><path d="M8 8c2-1 3 2 5 0" stroke="#6ac06a" strokeWidth="2" /></Ico></button>
            <button aria-label="大綱模式"><Ico w={12}><path d="M1 1.500h7M4 4h8M4 6.500h8M2 9h7M1 11.500h10" stroke="#666" /></Ico></button>
            <button aria-label="草稿"><Ico w={13} h={12}><path d="M0 1h13M0 4h13M0 7.500h13M0 10.500h13" stroke="#555" strokeWidth="1.500" /></Ico></button>
          </Views>
          <Percent>60%</Percent>
          <Round aria-label="縮小"><Ico w={20}><circle cx="10" cy="10" r="9.300" fill="#eef4fb" stroke="#5b7fae" /><path d="M5 10h10" stroke="#46536a" strokeWidth="2.400" /></Ico></Round>
          <Zoom type="range" min={0} max={100} defaultValue={27} aria-label="顯示比例" />
          <Round aria-label="放大"><Ico w={20}><circle cx="10" cy="10" r="9.300" fill="#eef4fb" stroke="#5b7fae" /><path d="M5 10h10M10 5v10" stroke="#46536a" strokeWidth="2.400" /></Ico></Round>
        </StatusRight>
      </Status>

      <Taskbar>
        <Task aria-label="開始"><Ico w={20}><path d="M0 3l8.500-1.200V9.500H0zM9.500 1.600 20 0v9.500H9.500zM0 10.500h8.500v7.700L0 17zM9.500 10.500H20V20L9.500 18.400z" fill="#fff" /></Ico></Task>
        <Task aria-label="搜尋"><Ico w={24} h={20}><circle cx="12.500" cy="7.500" r="6.700" stroke="#fff" strokeWidth="1.500" /><path d="M7.500 12.500 1 19.500" stroke="#fff" strokeWidth="1.500" /></Ico></Task>
        <Task aria-label="Edge">
          <Ico w={30}><defs><linearGradient id="eg" x1="0" x2="1"><stop offset="0" stopColor="#2aa5de" /><stop offset="1" stopColor="#5fd46c" /></linearGradient></defs>
            <circle cx="15" cy="15" r="15" fill="#1566b8" /><path d="M0 14C2 4 9 0 15 0c9 0 15 6 15 12 0 5-4 8-8 8-5 0-5-2-4-3 2-3 0-9-7-9C5 8 1 11 0 14Z" fill="url(#eg)" /><path d="M11 12c-4 8 2 15 11 14 3 0 5-1.500 6-3-6 4-17 1-12-8 0-3-4-4-5-3Z" fill="#0c4f94" /><path d="M17 18c1 4 7 4 12 1l1 4-6 0c-4 0-8-1-8-5 0-1 1-1 1 0Z" fill="#464646" /></Ico>
        </Task>
        <Task $open aria-label="剪取工具"><Ico w={28}><ellipse cx="12" cy="14" rx="12" ry="6" fill="#a8a8a8" transform="rotate(-12 12 14)" /><ellipse cx="13" cy="8" rx="12" ry="6.500" fill="#f5f5f5" stroke="#d23a3a" strokeWidth="1.500" transform="rotate(-15 13 8)" /><path d="m13 5 4 13M10 12l13 5" stroke="#777" /><ellipse cx="16" cy="22.500" rx="2.700" ry="4.500" stroke="#3098d8" strokeWidth="1.800" transform="rotate(15 16 22)" /><ellipse cx="23" cy="19" rx="4.500" ry="2.700" stroke="#3098d8" strokeWidth="1.800" transform="rotate(30 23 19)" /></Ico></Task>
        <Task $open aria-label="小畫家"><Ico w={30} h={28}><path d="M2 18C0 9 9 3 17 5c9 2 11 9 8 15-4 7-13 8-14 4s-7 0-9-6Z" fill="#d3e6f5" stroke="#93b5d2" /><circle cx="7" cy="15" r="2.300" fill="#d84a30" /><circle cx="10" cy="10" r="2.300" fill="#6cb23c" /><circle cx="16" cy="8" r="2.300" fill="#f0b020" /><circle cx="13" cy="18" r="1.500" fill="#444" /><circle cx="20" cy="19" r="2.300" fill="#2c74d0" /><path d="M26 5 17 25" stroke="#e09c3a" strokeWidth="3.500" strokeLinecap="round" /><path d="m24 6 1-5 5 2-3 4z" fill="#b88858" /></Ico></Task>
        <Task $open aria-label="相片"><Ico w={28}><rect width="28" height="28" fill="#35a4ec" /><path d="M0 22 8 12 24 28H0z" fill="#123f78" /><path d="M14 18 19 14 28 23v5h-4z" fill="#3b6cc4" /><circle cx="18.500" cy="6.500" r="2.700" fill="#fff" /></Ico></Task>
        <Task $bg="#b46f30" aria-label="LINE"><Ico w={30}><rect width="30" height="30" rx="5" fill="#04b900" /><path d="M15 5c7 0 11.500 4 11.500 9S20 23 15 26c0-2 0-2.500-1-3C8 23 3.500 19 3.500 14S8 5 15 5Z" fill="#fff" /><text x="15" y="17" fontSize="7" fontWeight="700" fontFamily="Liberation Sans" textAnchor="middle" fill="#04a900">LINE</text></Ico></Task>
        <Task $open aria-label="Chrome"><Chrome badge="君彥" fill="#9a3bb4" text="8" /></Task>
        <Task $open aria-label="檔案總管"><Ico w={28} h={24}><path d="M0 1h12l2 3h14v20H0z" fill="#e7a824" /><path d="M0 6h28v17H0z" fill="#fdd667" /><path d="M5 24V13h18v11h-5v-5h-8v5z" fill="#3e94cf" /></Ico></Task>
        <Task aria-label="記事本"><Ico w={28}><path d="m20 5 6 2-1 18-7 2z" fill="#e8e8d0" /><path d="M9 2h14l-4 24L1 21z" fill="#8fc8d2" stroke="#d4ecf0" /><path d="m9 2 14 0-2 9C13 9 8 15 4 16Z" fill="#c6e6ea" /><path d="M10 1.500h13" stroke="#666" strokeWidth="2" strokeDasharray="1.500 1" /></Ico></Task>
        <Task $open aria-label="Chrome C"><Chrome badge="C" fill="#3d5464" text="10" /></Task>
        <Task $open aria-label="Excel"><OfficeApp c="#2f7d32" d="#d3e8cc" excel /></Task>
        <Task $bg="#6c6c6c" $open aria-label="Word"><OfficeApp c="#2651a4" d="#7fa4e4" /></Task>
        <Tray>
          <button aria-label="顯示隱藏的圖示"><Ico w={17} h={10}><path d="m.5 9 8-8 8 8" stroke="#fff" strokeWidth="1.500" /></Ico></button>
          <TrayIcon aria-label="音量"><Ico w={19} h={14}><path d="M1 4.500h3l4-4v13l-4-4H1zM11 4l7 7M18 4l-7 7" stroke="#fff" strokeWidth="1.200" /></Ico></TrayIcon>
          <TrayIcon>中</TrayIcon>
          <Ime>ㄅ</Ime>
          <Clock>上午 11:29<br />2022/12/8</Clock>
          <button aria-label="通知"><Ico w={30}><path d="M0 1h20v15H11l-5 5v-5H0z" fill="#fff" /><path d="M4 5.500h12M4 9h12M4 12.500h6" stroke="#444" /><circle cx="20" cy="20" r="9.500" fill="#464646" stroke="#999" /><text x="20" y="25" fontSize="14" fontWeight="400" fontFamily="Open Sans" textAnchor="middle" fill="#fff">1</text></Ico></button>
        </Tray>
      </Taskbar>

      {/* screen tip of the finish button */}
      <SuperTip $x={966} $y={178} $w={208} $h={191} role="tooltip">
        <TipTitle>完成與合併</TipTitle>
        <p>完成合併列印。</p>
        <p>您可以為每個信件建立個別的文件，並將這些文件直接傳送到印表機，或透過電子郵件傳送這些文件。</p>
        <TipHelp><Help />按 F1 取得更多說明。</TipHelp>
      </SuperTip>

      {/* step 2: opened menu */}
      <Snip $x={1227} $y={140} $w={319} $h={208}>
        <SnipRibbon>
          <GroupEdge><span><LastRec /></span><i /></GroupEdge>
          <Group $w={57}><GroupBody><BigButton w={50} state="pressed" icon={<Finish />} l1="完成與" l2="合併" drop /></GroupBody></Group>
        </SnipRibbon>
        <SnipRuler>{evens(46, 68).map((n) => <span key={n}>{n}</span>)}<Marker $x={273}><GridMark /></Marker></SnipRuler>
        <SnipPage><div><VText $size={36} $flip>稱»</VText></div><Pilcrow /><Pilcrow /></SnipPage>
      </Snip>
      <Menu $x={1252} $y={232} $w={218} $h={85} role="menu">
        <MenuItem $hot><MenuIcon k={0} /><span>編輯個別文件(<u>E</u>)...</span></MenuItem>
        <MenuItem><MenuIcon k={1} /><span>列印文件(<u>P</u>)...</span></MenuItem>
        <MenuItem><MenuIcon k={2} /><span>傳送電子郵件訊息(<u>S</u>)...</span></MenuItem>
      </Menu>
      <PlainTip $x={1449} $y={274} $w={97} $h={29}>編輯個別文件</PlainTip>

      {/* step 3: merge dialog */}
      <SnipDoc $x={1117} $y={450} $w={420} $h={231}>
        <div><Peek $x={16} $y={2}><VText $size={36}>稱</VText></Peek><PeekSel /></div>
        <div><Peek $x={159} $y={-8}><VText $size={36} $flip>«職</VText></Peek></div>
      </SnipDoc>
      <Dialog $x={1137} $y={476} $w={374} $h={186} role="dialog" aria-label="合併到新文件">
        <DialogTitle>
          <strong>合併到新文件</strong>
          <button aria-label="說明">?</button>
          <button aria-label="關閉"><Ico w={12}><path d="m0 0 12 12M12 0 0 12" stroke="#111" /></Ico></button>
        </DialogTitle>
        <Fieldset>
          <Legend>合併記錄</Legend>
          <Choice><Radio type="radio" name="rec" id="all" defaultChecked /><Dotted htmlFor="all">全部(<u>A</u>)</Dotted></Choice>
          <Choice><Radio type="radio" name="rec" id="cur" /><label htmlFor="cur">目前的記錄(<u>E</u>)</label></Choice>
          <Choice>
            <Radio type="radio" name="rec" id="from" /><label htmlFor="from">從(<u>F</u>):</label>
            <RangeField><Box aria-label="從" /><label htmlFor="to">到(<u>T</u>):</label><Box id="to" /></RangeField>
          </Choice>
        </Fieldset>
        <Buttons><Push $main>確定</Push><Push>取消</Push></Buttons>
      </Dialog>

      {/* annotations */}
      <Strokes width="1598" height="898" fill="none" stroke={RED} strokeWidth="5" strokeLinecap="round"><path d="M1062 118 1213 159M1405 334 1344 462" /></Strokes>
      <Note $x={1058} $y={62} $w={300} $h={46}>2-5<span>完成與合併</span></Note>
      <Frame $x={935} $y={42} $w={111} $h={142} />
      <Frame $x={1245} $y={223} $w={239} $h={51} />
      <Frame $x={1239} $y={613} $w={149} $h={59} />
      <Badge $x={859} $y={55} $w={61} $h={55}>1</Badge>
      <Badge $x={1499} $y={209} $w={77} $h={67}>2</Badge>
      <Badge $x={1163} $y={615} $w={75} $h={69}>3</Badge>
    </Shell>
  );
}
